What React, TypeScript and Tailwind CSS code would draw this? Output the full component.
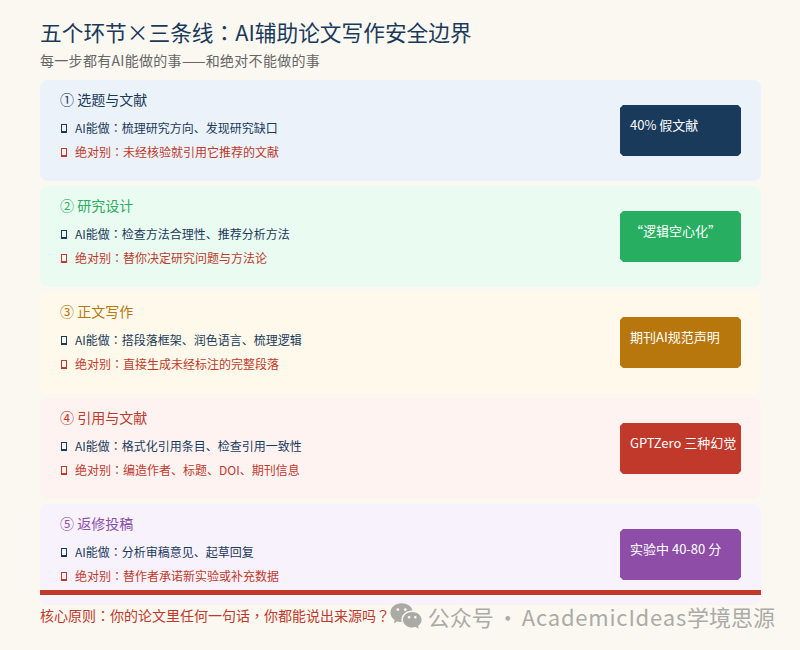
import { RiWechatFill } from "react-icons/ri";

const stages = [
  {
    title: "① 选题与文献",
    can: "AI能做：梳理研究方向、发现研究缺口",
    never: "绝对别：未经核验就引用它推荐的文献",
    badge: "40% 假文献",
    card: "bg-[#ebf2fa]",
    text: "text-[#1a3a5c]",
    fill: "bg-[#1a3a5c]",
  },
  {
    title: "② 研究设计",
    can: "AI能做：检查方法合理性、推荐分析方法",
    never: "绝对别：替你决定研究问题与方法论",
    badge: "“逻辑空心化”",
    card: "bg-[#eafbf1]",
    text: "text-[#27ae60]",
    fill: "bg-[#27ae60]",
  },
  {
    title: "③ 正文写作",
    can: "AI能做：搭段落框架、润色语言、梳理逻辑",
    never: "绝对别：直接生成未经标注的完整段落",
    badge: "期刊AI规范声明",
    card: "bg-[#fef9ea]",
    text: "text-[#b7770d]",
    fill: "bg-[#b7770d]",
  },
  {
    title: "④ 引用与文献",
    can: "AI能做：格式化引用条目、检查引用一致性",
    never: "绝对别：编造作者、标题、DOI、期刊信息",
    badge: "GPTZero 三种幻觉",
    card: "bg-[#fef3f1]",
    text: "text-[#c0392b]",
    fill: "bg-[#c0392b]",
  },
  {
    title: "⑤ 返修投稿",
    can: "AI能做：分析审稿意见、起草回复",
    never: "绝对别：替作者承诺新实验或补充数据",
    badge: "实验中 40-80 分",
    card: "bg-[#f8f2fd]",
    text: "text-[#8e4ea8]",
    fill: "bg-[#8e4ea8]",
  },
];

// the reference centres these marks in their cell, which the TC cut of the font does
function Marks({ text }: { text: string }) {
  return (
    <>
      {text.split(/([：，？])/).map((part, i) =>
        i % 2 === 1 ? (
          <span key={i} className="font-['Noto_Sans_CJK_TC']">
            {part}
          </span>
        ) : (
          part
        ),
      )}
    </>
  );
}

function Tofu({ color }: { color: string }) {
  return <span className={`mr-[8px] ml-[1px] h-[9px] w-[6px] shrink-0 border border-b-2 ${color}`} />;
}

export default function App() {
  return (
    <div className="relative h-[650px] w-[800px] overflow-hidden bg-[#fbf8f1] px-[40px] pt-[18px] font-['Noto_Sans_CJK_SC','Liberation_Sans',sans-serif]">
      <h1 className="text-[21.7px] leading-[28px] text-[#1a3a5c]">
        <Marks text="五个环节×三条线：AI辅助论文写作安全边界" />
      </h1>
      <p className="mt-[5px] text-[14px] leading-[18px] tracking-[0.3px] text-[#666666]">
        每一步都有AI能做的事——和绝对不能做的事
      </p>

      <div className="relative mt-[11px] flex w-[721px] flex-col gap-[5px]">
        {stages.map((s) => (
          <div
            key={s.title}
            className={`flex h-[101px] items-center justify-between rounded-[8px] px-[20px] ${s.card}`}
          >
            <div className="flex flex-col self-start pt-[10px]">
              <div className={`text-[14px] leading-[18px] ${s.text}`}>{s.title}</div>
              <div className="mt-[12px] flex items-center text-[12px] leading-[16px] text-[#1a3a5c]">
                <Tofu color="border-[#1a3a5c]" />
                <span><Marks text={s.can} /></span>
              </div>
              <div className="mt-[8px] flex items-center text-[12px] leading-[16px] text-[#c0392b]">
                <Tofu color="border-[#c0392b]" />
                <span><Marks text={s.never} /></span>
              </div>
            </div>
            <div
              className={`h-[51px] w-[121px] px-[10px] pt-[11px] text-[13px] leading-[18px] whitespace-nowrap text-white [clip-path:polygon(3px_0,calc(100%-3px)_0,100%_3px,100%_calc(100%-3px),calc(100%-3px)_100%,3px_100%,0_calc(100%-3px),0_3px)] ${s.fill}`}
            >
              {s.badge}
            </div>
          </div>
        ))}
        <div className="absolute right-0 bottom-[10px] left-0 h-[5px] bg-[#c0392b]" />
      </div>

      <div className="text-[14px] text-[#c0392b]">
        <Marks text="核心原则：你的论文里任何一句话，你都能说出来源吗？" />
      </div>

      <div className="absolute top-[599px] right-[25px] flex items-center text-[22px] leading-[30px] text-[#ababa6]">
        <RiWechatFill className="mr-[5px] h-[34px] w-[34px]" />
        <span>公众号</span>
        <span className="mx-[3px]">·</span>
        <span className="tracking-[0.8px]">AcademicIdeas</span>
        <span>学境思源</span>
      </div>
    </div>
  );
}
